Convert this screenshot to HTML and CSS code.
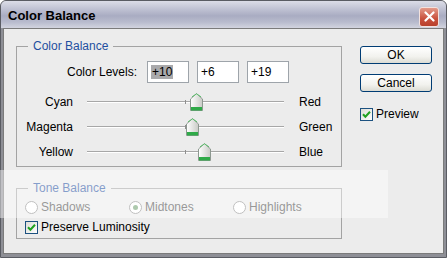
FILE: index.html
```html
<!DOCTYPE html>
<html lang="en">
<head>
    <meta charset="UTF-8">
    <title>Color Balance</title>
    <link rel="stylesheet" href="styles.css">
</head>
<body>
    <div class="window">
        <div class="titlebar">
            <span class="title">Color Balance</span>
            <button class="close-btn" aria-label="Close">
                <svg width="11" height="11" viewBox="0 0 11 11"><path d="M1.5 1.5 L9.5 9.5 M9.5 1.5 L1.5 9.5" stroke="#fff" stroke-width="2.2" stroke-linecap="round"/></svg>
            </button>
        </div>
        <div class="client">
            <div class="main">
                <fieldset class="group balance">
                    <legend>Color Balance</legend>
                    <div class="levels">
                        <span class="levels-label">Color Levels:</span>
                        <div class="field"><span class="sel">+10</span></div>
                        <div class="field">+6</div>
                        <div class="field">+19</div>
                    </div>
                    <div class="slider-row">
                        <span class="from">Cyan</span>
                        <div class="track">
                            <span class="tick"></span>
                            <svg class="thumb" style="left: 103px" width="13" height="18" viewBox="0 0 13 18"><use href="#thumb"/></svg>
                        </div>
                        <span class="to">Red</span>
                    </div>
                    <div class="slider-row">
                        <span class="from">Magenta</span>
                        <div class="track">
                            <span class="tick"></span>
                            <svg class="thumb" style="left: 99px" width="13" height="18" viewBox="0 0 13 18"><use href="#thumb"/></svg>
                        </div>
                        <span class="to">Green</span>
                    </div>
                    <div class="slider-row">
                        <span class="from">Yellow</span>
                        <div class="track">
                            <span class="tick"></span>
                            <svg class="thumb" style="left: 111px" width="13" height="18" viewBox="0 0 13 18"><use href="#thumb"/></svg>
                        </div>
                        <span class="to">Blue</span>
                    </div>
                </fieldset>

                <fieldset class="group tone">
                    <legend>Tone Balance</legend>
                    <div class="radios">
                        <label class="radio"><span class="dot"></span>Shadows</label>
                        <label class="radio"><span class="dot on"></span>Midtones</label>
                        <label class="radio"><span class="dot"></span>Highlights</label>
                    </div>
                    <label class="check preserve">
                        <svg width="13" height="13" viewBox="0 0 13 13"><use href="#checkbox"/></svg>
                        Preserve Luminosity
                    </label>
                </fieldset>
            </div>

            <div class="side">
                <button class="btn">OK</button>
                <button class="btn">Cancel</button>
                <label class="check preview">
                    <svg width="13" height="13" viewBox="0 0 13 13"><use href="#checkbox"/></svg>
                    Preview
                </label>
            </div>
        </div>
        <div class="watermark"></div>
    </div>

    <svg width="0" height="0" class="defs">
        <defs>
            <linearGradient id="thumbFill" x1="0" y1="0" x2="1" y2="0">
                <stop offset="0" stop-color="#ffffff"/>
                <stop offset="1" stop-color="#c9cbc6"/>
            </linearGradient>
            <linearGradient id="boxFill" x1="0" y1="0" x2="1" y2="1">
                <stop offset="0" stop-color="#dcdcd6"/>
                <stop offset="1" stop-color="#ffffff"/>
            </linearGradient>
            <symbol id="thumb" viewBox="0 0 13 18">
                <path d="M0.5 6 L6.5 0.5 L12.5 6 V17.5 H0.5 Z" fill="url(#thumbFill)" stroke="#8d9890"/>
                <path d="M2 3.8 L6.5 0.9 L11 3.8" fill="none" stroke="#5fbf6e" stroke-width="1"/>
                <rect x="1" y="14" width="11" height="3.5" fill="#2faa48"/>
            </symbol>
            <symbol id="checkbox" viewBox="0 0 13 13">
                <rect x="0.5" y="0.5" width="12" height="12" fill="url(#boxFill)" stroke="#1c5180"/>
                <path d="M3 6.2 L5.4 8.8 L10 3.8" fill="none" stroke="#21a121" stroke-width="2"/>
            </symbol>
        </defs>
    </svg>
</body>
</html>
```

FILE: styles.css
```css
body {
    margin: 0;
    background: #ffffff;
    font-family: "Liberation Sans", Arial, sans-serif;
    font-size: 12px;
    color: #000;
}

.defs {
    position: absolute;
}

.window {
    position: relative;
    width: 447px;
    height: 258px;
    box-sizing: border-box;
    border: 1px solid #5a5c63;
    border-radius: 6px 6px 0 0;
    background: #8e8f96;
    display: flex;
    flex-direction: column;
}

.titlebar {
    height: 27px;
    display: flex;
    align-items: center;
    justify-content: space-between;
    padding: 0 7px 0 7px;
    border-radius: 5px 5px 0 0;
    background: linear-gradient(#dcdde7 0%, #c4c6d6 25%, #a9acc2 55%, #b8bbcd 78%, #d2d4df 100%);
}

.title {
    font-weight: bold;
    font-size: 13px;
    margin-top: 2px;
}

.close-btn {
    width: 20px;
    height: 20px;
    margin-top: 4px;
    padding: 0;
    border: 1px solid #f3e2de;
    border-radius: 3px;
    background: linear-gradient(#e39a8a, #c9503c 60%, #b8402c);
    display: flex;
    align-items: center;
    justify-content: center;
}

.client {
    flex: 1;
    margin: 0 2px 3px 2px;
    border: 1px solid #7b7b7b;
    background: #ececec;
    display: flex;
}

.main {
    width: 338px;
    padding-left: 12px;
    box-sizing: border-box;
}

.group {
    width: 326px;
    box-sizing: border-box;
    margin: 0;
    padding: 0;
    border: 1px solid #a3a3a3;
}

.group legend {
    margin-left: 11px;
    padding: 0 5px;
    line-height: 14px;
    color: #1f4fa0;
}

.balance {
    margin-top: 10px;
    padding-top: 8px;
    padding-bottom: 2px;
}

.levels {
    display: flex;
    align-items: center;
    height: 22px;
}

.levels-label {
    width: 120px;
    text-align: right;
    margin-right: 10px;
}

.field {
    width: 42px;
    height: 22px;
    box-sizing: border-box;
    margin-right: 8px;
    border: 1px solid #9ea4aa;
    background: #fff;
    padding: 3px 0 0 3px;
}

.sel {
    background: #a9a9ab;
    padding: 0 1px;
}

.slider-row {
    display: flex;
    align-items: center;
    height: 25px;
}

.levels + .slider-row {
    margin-top: 6px;
}

.from {
    width: 56px;
    text-align: right;
    margin-right: 14px;
}

.track {
    position: relative;
    width: 197px;
    height: 0;
    border-top: 1px solid #a7a7a7;
    border-bottom: 1px solid #ffffff;
}

.tick {
    position: absolute;
    left: 98px;
    top: -2px;
    width: 1px;
    height: 4px;
    background: #8f8f8f;
}

.thumb {
    position: absolute;
    top: -9px;
}

.to {
    margin-left: 15px;
}

.tone {
    margin-top: 14px;
    padding: 4px 0 3px 8px;
}

.tone legend {
    margin-left: 3px;
}

.radios {
    display: grid;
    grid-template-columns: 104px 104px 104px;
    height: 16px;
    align-items: center;
}

.radio {
    display: flex;
    align-items: center;
    gap: 3px;
    color: #444;
}

.dot {
    width: 11px;
    height: 11px;
    border: 1px solid #8c8c8c;
    border-radius: 50%;
    background: #fff;
    display: flex;
    align-items: center;
    justify-content: center;
}

.dot.on::after {
    content: "";
    width: 5px;
    height: 5px;
    border-radius: 50%;
    background: #6a9d6a;
}

.check {
    display: flex;
    align-items: center;
    gap: 3px;
}

.preserve {
    margin-top: 4px;
    height: 16px;
}

.side {
    margin-left: 18px;
    padding-top: 17px;
    display: flex;
    flex-direction: column;
    align-items: flex-start;
}

.btn {
    width: 72px;
    height: 18px;
    padding: 0;
    border: 1px solid #003c74;
    border-radius: 3px;
    background: linear-gradient(#ffffff, #f2f2ee 60%, #dcdcd4);
    font-family: "Liberation Sans", Arial, sans-serif;
    font-size: 12px;
    color: #000;
}

.btn + .btn {
    margin-top: 10px;
}

.preview {
    margin-top: 15px;
}

.watermark {
    position: absolute;
    left: -1px;
    top: 169px;
    width: 388px;
    height: 48px;
    background: rgba(255, 255, 255, 0.45);
}
```
